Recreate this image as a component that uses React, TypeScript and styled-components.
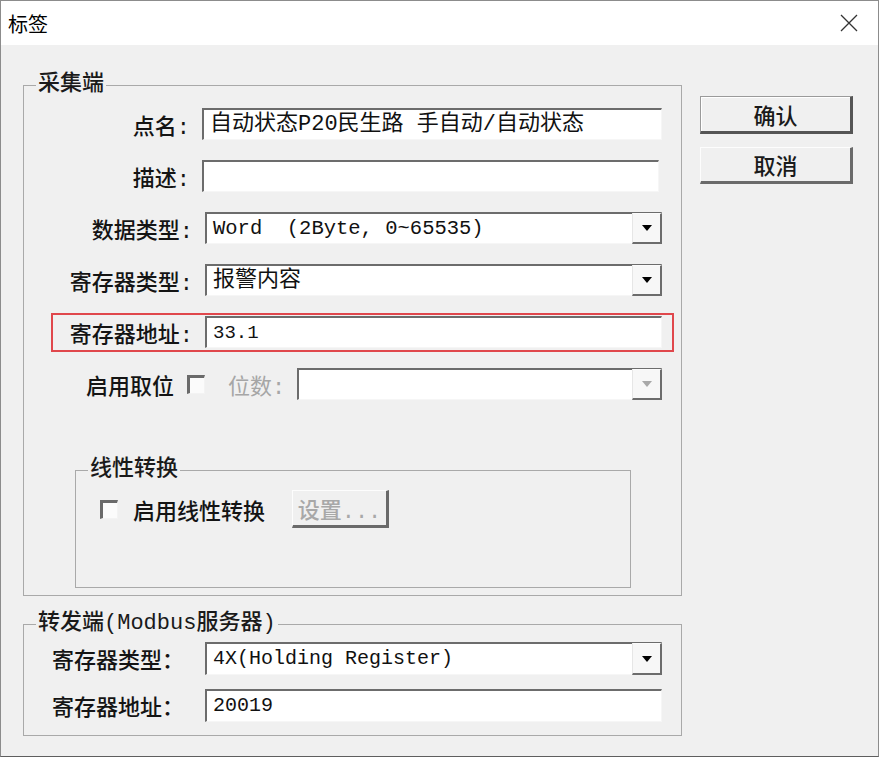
import React from 'react'
import styled, { createGlobalStyle, css } from 'styled-components'

const GlobalStyle = createGlobalStyle`
  html, body {
    margin: 0;
    padding: 0;
    background: #fff;
  }
  * {
    box-sizing: border-box;
  }
`

const FONT = `"Liberation Mono", "Noto Sans CJK SC", monospace`

const App = () => {
  return (
    <>
      <GlobalStyle />
      <Window>
        <TitleBar>
          <Title>标签</Title>
          <CloseIcon width='20' height='20' viewBox='0 0 20 20'>
            <path d='M2 2 L18 18 M18 2 L2 18' stroke='#333' strokeWidth='1.3' fill='none' />
          </CloseIcon>
        </TitleBar>
        <Body>
          <MainColumn>
            <Group>
              <Legend>采集端</Legend>
              <GroupInner $padding='11px 19px 7px 0'>
                <Rows $gap={20}>
                  <FieldRow>
                    <FieldLabel $width={166}>点名:</FieldLabel>
                    <TextBox>
                      <Value>自动状态P20民生路 手自动/自动状态</Value>
                    </TextBox>
                  </FieldRow>
                  <FieldRow>
                    <FieldLabel $width={166}>描述:</FieldLabel>
                    <TextBox $trim={3}>
                      <Value />
                    </TextBox>
                  </FieldRow>
                  <FieldRow>
                    <FieldLabel $width={169}>数据类型:</FieldLabel>
                    <ComboBox value='Word  (2Byte, 0~65535)' size={20.5} />
                  </FieldRow>
                  <FieldRow>
                    <FieldLabel $width={169}>寄存器类型:</FieldLabel>
                    <ComboBox value='报警内容' />
                  </FieldRow>
                  <FieldRow $highlight>
                    <FieldLabel $width={169}>寄存器地址:</FieldLabel>
                    <TextBox>
                      <Value $size={19}>33.1</Value>
                    </TextBox>
                  </FieldRow>
                  <FieldRow>
                    <FieldLabel $width={181} $gap={13} $gapRight={23}>
                      启用取位
                      <CheckBox />
                    </FieldLabel>
                    <DimText>位数:</DimText>
                    <ComboBox disabled />
                  </FieldRow>
                </Rows>
                <Group $width={556} $margin='58px 0 0 51px'>
                  <Legend>线性转换</Legend>
                  <GroupInner $padding='8px 0 59px 24px'>
                    <CheckRow>
                      <CheckBox />
                      <CheckLabel>启用线性转换</CheckLabel>
                      <PushButton $disabled $width={97} $height={38}>
                        设置...
                      </PushButton>
                    </CheckRow>
                  </GroupInner>
                </Group>
              </GroupInner>
            </Group>
            <Group $margin='16px 0 0 0'>
              <Legend>转发端(Modbus服务器)</Legend>
              <GroupInner $padding='6px 19px 13px 28px'>
                <Rows $gap={14}>
                  <FieldRow $height={33}>
                    <FieldLabel $width={141} $left>
                      寄存器类型：
                    </FieldLabel>
                    <ComboBox value='4X(Holding Register)' size={20} />
                  </FieldRow>
                  <FieldRow $height={33}>
                    <FieldLabel $width={141} $left>
                      寄存器地址：
                    </FieldLabel>
                    <TextBox>
                      <Value $size={20}>20019</Value>
                    </TextBox>
                  </FieldRow>
                </Rows>
              </GroupInner>
            </Group>
          </MainColumn>
          <ButtonColumn>
            <PushButton $default $width={153} $height={38}>
              确认
            </PushButton>
            <PushButton $width={153} $height={37}>
              取消
            </PushButton>
          </ButtonColumn>
        </Body>
      </Window>
    </>
  )
}

const ComboBox: React.FC<{ value?: string; disabled?: boolean; size?: number }> = ({
  value,
  disabled,
  size,
}) => {
  return (
    <TextBox>
      <Value $size={size}>{value}</Value>
      <DropButton>
        <Arrow $disabled={disabled} />
      </DropButton>
    </TextBox>
  )
}

const Window = styled.div`
  width: 879px;
  height: 757px;
  border: 1px solid #8c8c8c;
  border-bottom-color: #5e5e5e;
  background: #f0f0f0;
  display: flex;
  flex-direction: column;
  font-family: ${FONT};
  color: #141414;
`

const TitleBar = styled.div`
  height: 44px;
  background: #fff;
  display: flex;
  align-items: center;
  justify-content: space-between;
  padding: 0 19px 0 7px;
`

const Title = styled.span`
  font-family: 'Noto Sans CJK SC', sans-serif;
  font-size: 20px;
  color: #000;
`

const CloseIcon = styled.svg`
  display: block;
`

const Body = styled.div`
  flex: 1;
  display: flex;
  align-items: flex-start;
  gap: 18px;
  padding: 28px 0 0 22px;
`

const MainColumn = styled.div`
  width: 659px;
  display: flex;
  flex-direction: column;
`

const ButtonColumn = styled.div`
  display: flex;
  flex-direction: column;
  gap: 13px;
  margin-top: 23px;
`

const Group = styled.fieldset<{ $width?: number; $margin?: string }>`
  margin: ${p => p.$margin || '0'};
  padding: 0;
  min-inline-size: 0;
  width: ${p => (p.$width ? `${p.$width}px` : 'auto')};
  border: 1px solid #a9a9a9;
`

const Legend = styled.legend`
  margin-left: 12px;
  padding: 0 2px;
  font-size: 22px;
  line-height: 24px;
  font-weight: 500;
  color: #1a1a1a;
`

const GroupInner = styled.div<{ $padding: string }>`
  padding: ${p => p.$padding};
`

const Rows = styled.div<{ $gap: number }>`
  display: flex;
  flex-direction: column;
  gap: ${p => p.$gap}px;
`

const FieldRow = styled.div<{ $highlight?: boolean; $height?: number }>`
  position: relative;
  display: flex;
  align-items: center;
  height: ${p => p.$height || 32}px;
  ${p =>
    p.$highlight &&
    css`
      &::after {
        content: '';
        position: absolute;
        left: 27px;
        right: -12px;
        top: -3px;
        bottom: -4px;
        border: 2px solid #e0474c;
        pointer-events: none;
      }
    `}
`

const FieldLabel = styled.div<{ $width: number; $left?: boolean; $gap?: number; $gapRight?: number }>`
  flex: none;
  width: ${p => p.$width}px;
  margin-right: ${p => (p.$gapRight !== undefined ? p.$gapRight : 12)}px;
  display: flex;
  align-items: center;
  justify-content: ${p => (p.$left ? 'flex-start' : 'flex-end')};
  gap: ${p => p.$gap || 0}px;
  font-size: 22px;
  font-weight: 500;
  white-space: nowrap;
`

const DimText = styled.span`
  flex: none;
  font-size: 22px;
  color: #a6a6a6;
  margin-right: 12px;
`

const TextBox = styled.div<{ $trim?: number }>`
  flex: 1;
  height: 100%;
  margin-right: ${p => p.$trim || 0}px;
  display: flex;
  align-items: stretch;
  background: #fff;
  border-style: solid;
  border-width: 2px 1px 1px 2px;
  border-color: #6c6c6c #f6f6f6 #f6f6f6 #6c6c6c;
`

const Value = styled.div<{ $size?: number }>`
  flex: 1;
  display: flex;
  align-items: center;
  padding-left: 6px;
  font-size: ${p => p.$size || 22}px;
  line-height: 26px;
  color: #111;
  white-space: pre;
`

const DropButton = styled.div`
  flex: none;
  width: 30px;
  display: flex;
  align-items: center;
  justify-content: center;
  background: #f7f7f7;
  border-style: solid;
  border-width: 1px 2px 2px 1px;
  border-color: #fbfbfb #6c6c6c #6c6c6c #e6e6e6;
  margin: -1px -1px -1px 0;
`

const Arrow = styled.span<{ $disabled?: boolean }>`
  width: 0;
  height: 0;
  border-left: 5px solid transparent;
  border-right: 5px solid transparent;
  border-top: 6px solid ${p => (p.$disabled ? '#a8a8a8' : '#000')};
`

const CheckBox = styled.span`
  flex: none;
  display: inline-block;
  width: 18px;
  height: 19px;
  background: #fbfbfb;
  border-style: solid;
  border-width: 3px 1px 1px 3px;
  border-color: #6a6a6a #f3f3f3 #f3f3f3 #6a6a6a;
`

const CheckRow = styled.div`
  display: flex;
  align-items: center;
`

const CheckLabel = styled.span`
  font-size: 22px;
  font-weight: 500;
  margin: 0 27px 0 15px;
`

const PushButton = styled.div<{ $default?: boolean; $disabled?: boolean; $width: number; $height: number }>`
  width: ${p => p.$width}px;
  height: ${p => p.$height}px;
  display: flex;
  align-items: center;
  justify-content: center;
  font-size: 22px;
  font-weight: 500;
  background: #f0f0f0;
  color: ${p => (p.$disabled ? '#a8a8a8' : '#1a1a1a')};
  border-style: solid;
  border-width: 1px 3px 3px 1px;
  border-color: #fdfdfd #6a6a6a #6a6a6a #fdfdfd;
  ${p =>
    p.$default &&
    css`
      border-color: #9a9a9a #555 #555 #9a9a9a;
      box-shadow: inset 1px 1px 0 #fff;
    `}
`

export default App
